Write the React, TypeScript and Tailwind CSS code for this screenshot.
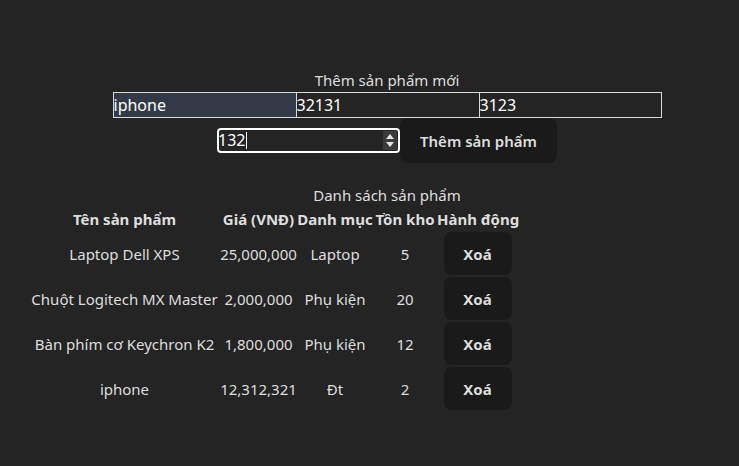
import React from "react";

const rows = [
  { name: "Laptop Dell XPS", price: "25,000,000", cat: "Laptop", stock: "5" },
  { name: "Chuột Logitech MX Master", price: "2,000,000", cat: "Phụ kiện", stock: "20" },
  { name: "Bàn phím cơ Keychron K2", price: "1,800,000", cat: "Phụ kiện", stock: "12" },
  { name: "iphone", price: "12,312,321", cat: "Đt", stock: "2" },
];

export default function App() {
  return (
    <div
      className="min-h-screen bg-[#242424] text-[#dedede] pt-[68px] text-[16px] leading-6"
      style={{ fontFamily: '"Noto Sans", "Open Sans", sans-serif' }}
    >
      <div className="pl-[35px] flex flex-col items-center">
        <div className="h-6 leading-6 text-[15px]">Thêm sản phẩm mới</div>
        <div className="flex">
          <div className="w-[183px] h-[26px] border-y border-l border-[#d9d9d9] bg-[#333a47] text-white leading-[24px] px-0 text-left">iphone</div>
          <div className="w-[183px] h-[26px] border-y border-l border-[#d9d9d9] text-white leading-[24px] text-left">32131</div>
          <div className="w-[183px] h-[26px] border border-[#d9d9d9] text-white leading-[24px] text-left">3123</div>
        </div>
        <div className="flex items-center">
          <div className="relative w-[183px] h-[25px] border-2 border-white rounded-[4px] flex items-center text-white">
            <span className="leading-[21px] ml-[-1px]">132</span>
            <span className="w-px h-[17px] bg-white ml-[1px]"></span>
            <div className="absolute right-[1px] top-[1px] bottom-[1px] w-[14px] bg-[#3a3a3a] flex flex-col items-center justify-center gap-[3px]">
              <svg width="8" height="5" viewBox="0 0 8 5"><path d="M0 5 L4 0 L8 5 Z" fill="#e5e5e5" /></svg>
              <svg width="8" height="5" viewBox="0 0 8 5"><path d="M0 0 L4 5 L8 0 Z" fill="#e5e5e5" /></svg>
            </div>
          </div>
          <button className="h-[45px] px-[20px] rounded-[8px] bg-[#1a1a1a] font-semibold text-[#dedede] text-[15px]">
            Thêm sản phẩm
          </button>
        </div>
        <div className="mt-[20px] h-6 leading-6 text-[15px]">Danh sách sản phẩm</div>
      </div>
      <div className="pl-[29px]">
        <div className="grid grid-cols-[191px_77px_76px_64px_81px] text-center">
          <div className="h-6 font-bold text-[15px] whitespace-nowrap">Tên sản phẩm</div>
          <div className="h-6 font-bold text-[15px] whitespace-nowrap">Giá (VNĐ)</div>
          <div className="h-6 font-bold text-[15px] whitespace-nowrap">Danh mục</div>
          <div className="h-6 font-bold text-[15px] whitespace-nowrap">Tồn kho</div>
          <div className="h-6 font-bold text-[15px] whitespace-nowrap">Hành động</div>
          {rows.map((r, i) => (
            <React.Fragment key={i}>
              <div className="h-[45px] flex items-center justify-center whitespace-nowrap text-[15px]">{r.name}</div>
              <div className="h-[45px] flex items-center justify-center whitespace-nowrap text-[15px]">{r.price}</div>
              <div className="h-[45px] flex items-center justify-center whitespace-nowrap text-[15px]">{r.cat}</div>
              <div className="h-[45px] flex items-center justify-center whitespace-nowrap text-[15px]">{r.stock}</div>
              <div className="h-[45px] flex items-center justify-center">
                <button className="w-[68px] h-[43px] rounded-[8px] bg-[#1a1a1a] font-bold text-[15px] text-[#dedede]">Xoá</button>
              </div>
            </React.Fragment>
          ))}
        </div>
      </div>
    </div>
  );
}
